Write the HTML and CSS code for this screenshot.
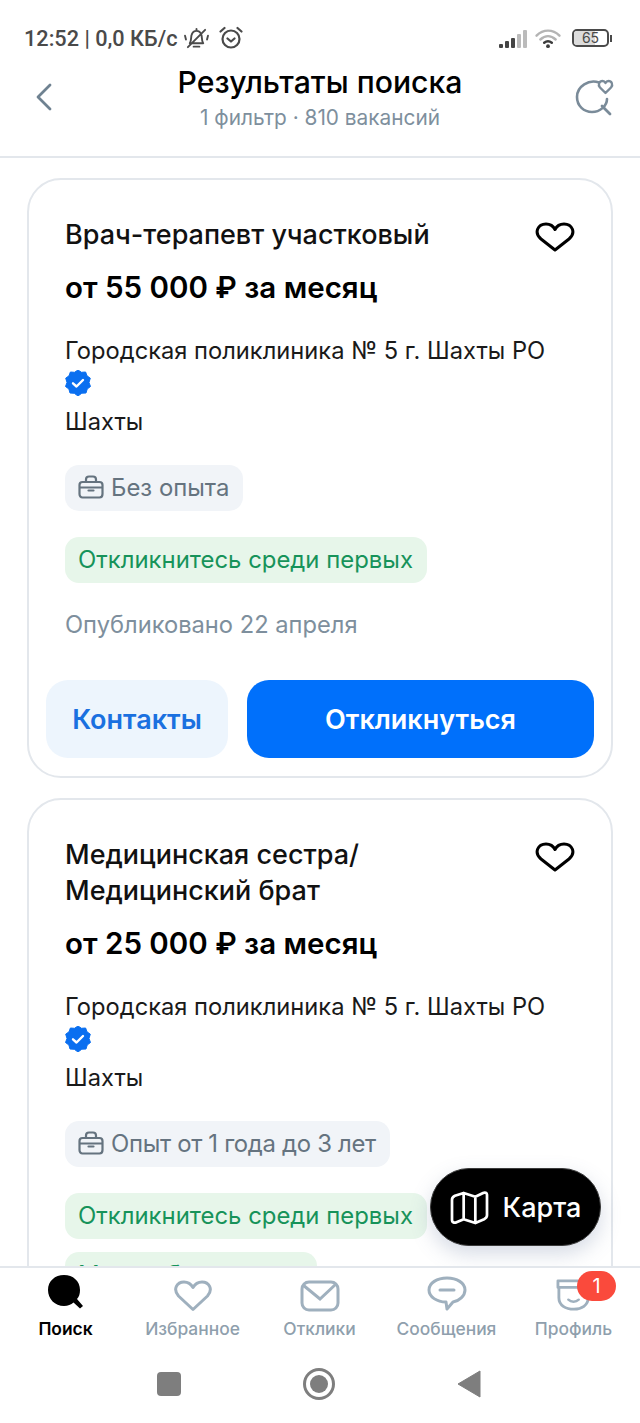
FILE: index.html
```html
<!DOCTYPE html>
<html lang="ru">
<head>
  <meta charset="UTF-8">
  <title>Результаты поиска</title>
  <link rel="stylesheet" href="styles.css">
</head>
<body>
  <svg class="defs" width="0" height="0">
    <symbol id="heart" viewBox="0 0 40 30">
      <path d="M20 28 L6 17 C-1.500 10.500 3 2 11 2 C15 2 18 3.500 20 7.500 C22 3.500 25 2 29 2 C37 2 41.500 10.500 34 17 Z" fill="none" stroke="currentColor" stroke-width="3" stroke-linejoin="round"/>
    </symbol>
    <symbol id="verified" viewBox="0 0 26 26">
      <path d="M13 0 L16.500 2.300 L20.600 2 L22 5.800 L25.300 8.200 L24 12.500 L25.500 16.500 L22.200 19 L21 23 L16.800 23.200 L13 26 L9.300 23.300 L5 23 L3.900 19 L0.500 16.500 L2 12.500 L0.700 8.200 L4 5.800 L5.400 2 L9.500 2.300 Z" fill="#0a6ff0" stroke="#0a6ff0" stroke-linejoin="round"/>
      <path d="M8 13.300 L11.500 16.500 L18 10" fill="none" stroke="#fff" stroke-width="2.400" stroke-linecap="round" stroke-linejoin="round"/>
    </symbol>
    <symbol id="case" viewBox="0 0 26 24">
      <path d="M8 7 V4.500 C8 2.500 9.500 1.500 11 1.500 H15 C16.500 1.500 18 2.500 18 4.500 V7 M4.500 7 H21.500 C23.300 7 24.500 8.200 24.500 10 V19 C24.500 21 23.300 22.500 21.500 22.500 H4.500 C2.700 22.500 1.500 21 1.500 19 V10 C1.500 8.200 2.700 7 4.500 7 Z M1.500 12.500 H24.500 M10.500 15.500 H15.500" fill="none" stroke="currentColor" stroke-width="2.200" stroke-linecap="round"/>
    </symbol>
  </svg>

  <div class="phone">
    <header class="top">
      <div class="statusbar">
        <div class="status-left">
          <span>12:52 | 0,0 КБ/с</span>
          <svg class="ic-bell" viewBox="0 0 28 24" width="27" height="23">
            <path d="M7 17 C9 14 8 10 9 8 C10 5 12 4 14 4 C16 4 18 5 19 8 C20 10 19 14 21 17 Z M11 20.500 H17 M14 2 V4 M5 21 L23 3 M2 9 L3 13 M26 9 L25 13" fill="none" stroke="#4a4a4a" stroke-width="2" stroke-linecap="round" stroke-linejoin="round"/>
          </svg>
          <svg class="ic-alarm" viewBox="0 0 24 24" width="24" height="24">
            <circle cx="12" cy="13" r="8.500" fill="none" stroke="#4a4a4a" stroke-width="2.200"/>
            <path d="M8.500 12.500 L12 15.500 L15.500 12.500 M1.500 5.500 L5.500 2 M22.500 5.500 L18.500 2" fill="none" stroke="#4a4a4a" stroke-width="2.200" stroke-linecap="round" stroke-linejoin="round"/>
          </svg>
        </div>
        <div class="status-right">
          <div class="signal">
            <i class="bar b1"></i><i class="bar b2"></i><i class="bar b3"></i><i class="bar b4 dim"></i><i class="bar b5 dim"></i>
          </div>
          <svg class="wifi" viewBox="0 0 28 22" width="28" height="21">
            <path d="M2 8 C9 1 19 1 26 8" fill="none" stroke="#b4b4b4" stroke-width="2.600" stroke-linecap="round"/>
            <path d="M6 12 C11 7.500 17 7.500 22 12" fill="none" stroke="#b4b4b4" stroke-width="2.600" stroke-linecap="round"/>
            <path d="M10 15.500 C12.500 13.500 15.500 13.500 18 15.500" fill="none" stroke="#3c3c3c" stroke-width="2.600" stroke-linecap="round"/>
            <circle cx="14" cy="19" r="2" fill="#3c3c3c"/>
          </svg>
          <div class="battery"><span class="fill"></span><span class="level">65</span></div>
          <i class="battery-tip"></i>
        </div>
      </div>
      <div class="titlebar">
        <svg class="back" viewBox="0 0 18 28" width="18" height="28">
          <path d="M15 2 L3 14 L15 26" fill="none" stroke="#6f8291" stroke-width="2.800" stroke-linecap="round" stroke-linejoin="round"/>
        </svg>
        <div class="title-text">
          <h1>Результаты поиска</h1>
          <p>1 фильтр · 810 вакансий</p>
        </div>
        <svg class="saved" viewBox="0 0 40 38" width="40" height="38">
          <path d="M24 3.500 C14 0 2 7 2 18 C2 27 9 33 17 33 C25 33 32 27 32 20" fill="none" stroke="#7a8b99" stroke-width="2.600" stroke-linecap="round"/>
          <path d="M27 27 L35 35" fill="none" stroke="#7a8b99" stroke-width="2.800" stroke-linecap="round"/>
          <path d="M30.500 14 L25 8.500 C22.500 5.500 24.500 2 27.500 2 C29 2 30 3 30.500 4 C31 3 32 2 33.500 2 C36.500 2 38.500 5.500 36 8.500 Z" fill="none" stroke="#7a8b99" stroke-width="2.400" stroke-linejoin="round"/>
        </svg>
      </div>
    </header>

    <main class="list">
      <article class="card">
        <div class="card-head">
          <h2>Врач-терапевт участковый</h2>
          <svg class="fav"><use href="#heart"/></svg>
        </div>
        <div class="salary">от 55 000 ₽ за месяц</div>
        <div class="company">Городская поликлиника № 5 г. Шахты РО</div>
        <svg class="verified"><use href="#verified"/></svg>
        <div class="city">Шахты</div>
        <div class="tags">
          <span class="tag tag-gray"><svg class="case"><use href="#case"/></svg>Без опыта</span>
          <span class="tag tag-green">Откликнитесь среди первых</span>
        </div>
        <div class="published">Опубликовано 22 апреля</div>
        <div class="actions">
          <button class="btn btn-light">Контакты</button>
          <button class="btn btn-primary">Откликнуться</button>
        </div>
      </article>

      <article class="card">
        <div class="card-head">
          <h2>Медицинская сестра/<br>Медицинский брат</h2>
          <svg class="fav"><use href="#heart"/></svg>
        </div>
        <div class="salary">от 25 000 ₽ за месяц</div>
        <div class="company">Городская поликлиника № 5 г. Шахты РО</div>
        <svg class="verified"><use href="#verified"/></svg>
        <div class="city">Шахты</div>
        <div class="tags">
          <span class="tag tag-gray tag-narrow"><svg class="case"><use href="#case"/></svg>Опыт от 1 года до 3 лет</span>
          <span class="tag tag-green">Откликнитесь среди первых</span>
          <span class="tag tag-green tag-tight">Можно без резюме</span>
        </div>
      </article>
    </main>

    <button class="map-btn">
      <svg viewBox="0 0 40 36" width="39" height="35">
        <path d="M14 3 L26 7 L34 3 C36 2 38 3 38 5 V26 C38 28 37 29 35 30 L26 34 L14 30 L6 33.500 C4 34 2 33 2 31 V10 C2 8 3 7 5 6 Z M14 3 V30 M26 7 V34" fill="none" stroke="#fff" stroke-width="2.800" stroke-linejoin="round"/>
      </svg>
      Карта
    </button>

    <nav class="tabbar">
      <a class="tab active">
        <svg viewBox="0 0 38 38" width="38" height="38">
          <path d="M17 1 C26 1 33 7 33 16 C33 20 32 23 30 25 L36 32 L33 34.500 L26.500 28.500 C24 30.500 21 32 17 32 C8 32 1 25 1 16 C1 7 8 1 17 1 Z" fill="#000"/>
        </svg>
        <span>Поиск</span>
      </a>
      <a class="tab">
        <svg viewBox="0 0 40 32" width="40" height="32">
          <path d="M20 29.500 L5.500 16 C-0.500 9 4 2 11 2 C15 2 18 4 20 7.500 C22 4 25 2 29 2 C36 2 40.500 9 34.500 16 Z" fill="none" stroke="#9fb0be" stroke-width="3" stroke-linejoin="round"/>
        </svg>
        <span>Избранное</span>
      </a>
      <a class="tab">
        <svg viewBox="0 0 40 32" width="40" height="32">
          <rect x="2" y="2" width="36" height="28" rx="7" fill="none" stroke="#9fb0be" stroke-width="3"/>
          <path d="M3 5 L20 19 L36 4" fill="none" stroke="#9fb0be" stroke-width="3"/>
        </svg>
        <span>Отклики</span>
      </a>
      <a class="tab">
        <svg viewBox="0 0 40 36" width="40" height="36">
          <path d="M20 2 C30 2 38 7 38 14 C38 20 32 25 26 26 L20 33 L19 26 C10 26 2 21 2 14 C2 7 10 2 20 2 Z M13 14 H27" fill="none" stroke="#9fb0be" stroke-width="3" stroke-linejoin="round" stroke-linecap="round"/>
        </svg>
        <span>Сообщения</span>
      </a>
      <a class="tab tab-profile">
        <svg viewBox="0 0 40 36" width="38" height="34">
          <path d="M3 3 L24 3 M3 3 V10 L30 10 M4 10 V21 C4 29 11 33 20 33 C28 33 35 29 35 21 V14" fill="none" stroke="#9fb0be" stroke-width="3" stroke-linecap="round" stroke-linejoin="round"/>
          <path d="M14 23 C17 26 22 26 25 23" fill="none" stroke="#9fb0be" stroke-width="2.600" stroke-linecap="round"/>
        </svg>
        <span>Профиль</span>
        <b class="badge">1</b>
      </a>
    </nav>

    <div class="navbar">
      <i class="nav-square"></i>
      <i class="nav-circle"><i class="nav-dot"></i></i>
      <svg class="nav-back" viewBox="0 0 24 28" width="24" height="28"><path d="M23 1 V27 L1 14 Z" fill="#7e7e7e" stroke="#7e7e7e" stroke-linejoin="round"/></svg>
    </div>
  </div>
</body>
</html>
```

FILE: styles.css
```css
* {
  box-sizing: border-box;
}

body {
  margin: 0;
  font-family: "Inter", "Noto Sans", sans-serif;
  background: #fff;
}

.defs {
  display: none;
}

.phone {
  width: 640px;
  height: 1423px;
  display: flex;
  flex-direction: column;
  position: relative;
  overflow: hidden;
  background: #fff;
}

/* top */
.top {
  height: 158px;
  flex: none;
  border-bottom: 2px solid #e3e7ec;
  padding-top: 24px;
}

.statusbar {
  height: 28px;
  display: flex;
  justify-content: space-between;
  align-items: center;
  padding: 0 28px 0 24px;
  color: #4a4a4a;
}

.status-left {
  display: flex;
  align-items: center;
  gap: 6px;
  font-size: 21.7px;
  font-family: "Roboto", sans-serif;
  font-weight: 500;
}

.ic-alarm {
  margin-left: 3px;
}

.status-right {
  display: flex;
  align-items: center;
  gap: 7px;
}

.signal {
  display: flex;
  align-items: flex-end;
  gap: 2px;
  height: 19px;
}

.wifi {
  margin-right: 3px;
}

.bar {
  width: 4px;
  background: #444;
  border-radius: 1px;
}
.bar.dim { background: #bbb; }
.b1 { height: 4px; }
.b2 { height: 7px; }
.b3 { height: 10px; }
.b4 { height: 14px; }
.b5 { height: 18px; }

.battery {
  width: 37px;
  height: 18px;
  border: 2px solid #4a4a4a;
  border-radius: 5px;
  position: relative;
  font-size: 14px;
  line-height: 14px;
  text-align: center;
  overflow: hidden;
}

.fill {
  position: absolute;
  left: 0;
  top: 0;
  bottom: 0;
  width: 64%;
  background: #dcdcdc;
}

.level {
  position: relative;
}

.battery-tip {
  width: 2px;
  height: 7px;
  margin-left: -6px;
  background: #4a4a4a;
}

.titlebar {
  display: flex;
  align-items: flex-start;
  justify-content: space-between;
  padding: 0 25px 0 35px;
  position: relative;
  height: 80px;
}

.back {
  margin-top: 31px;
}

.saved {
  margin-top: 27px;
}

.title-text {
  position: absolute;
  left: 0;
  right: 0;
  top: 10px;
  text-align: center;
}

h1 {
  margin: 0;
  font-size: 30.2px;
  line-height: 40px;
  font-weight: 500;
  color: #000;
}

.title-text p {
  margin: 2px 0 0;
  font-size: 20.8px;
  line-height: 28px;
  color: #7e8f9d;
}

/* list */
.list {
  flex: 1;
  min-height: 0;
  overflow: hidden;
  padding: 20px 27px 0;
  display: flex;
  flex-direction: column;
  gap: 20px;
}

.card {
  flex: none;
  border: 2px solid #e3e7ec;
  border-radius: 34px;
  padding: 37px 17px 18px 36px;
  background: #fff;
}

.card-head {
  display: flex;
  justify-content: space-between;
  align-items: flex-start;
  padding-right: 19px;
}

h2 {
  margin: 0;
  font-size: 27px;
  line-height: 36px;
  font-weight: 500;
  color: #111;
}

.fav {
  width: 40px;
  height: 30px;
  margin-top: 5px;
  flex: none;
  color: #000;
}

.salary {
  margin-top: 16px;
  font-size: 29.5px;
  line-height: 36px;
  font-weight: 600;
  color: #000;
}

.company {
  margin-top: 28px;
  font-size: 23.7px;
  line-height: 36px;
  color: #1a1a1a;
}

.verified {
  display: block;
  width: 26px;
  height: 26px;
  margin: 1px 0 0;
}

.city {
  margin-top: 8px;
  font-size: 23.7px;
  line-height: 36px;
  color: #1a1a1a;
}

.tags {
  margin-top: 25px;
  display: flex;
  flex-direction: column;
  align-items: flex-start;
  gap: 26px;
}

.tag {
  display: inline-flex;
  align-items: center;
  height: 46px;
  padding: 0 14px 2px 13px;
  border-radius: 14px;
  font-size: 23.9px;
}

.tag-narrow {
  letter-spacing: -0.32px;
}

.tag-tight {
  margin-top: -13px;
  letter-spacing: -0.25px;
}

.tag-gray {
  background: #f1f4f8;
  color: #65737f;
}

.tag-green {
  background: #e7f6ea;
  color: #17935a;
}

.case {
  width: 26px;
  height: 24px;
  margin-right: 7px;
  color: #65737f;
}

.published {
  margin-top: 24px;
  font-size: 23.7px;
  line-height: 36px;
  color: #7e8f9d;
}

.actions {
  margin-top: 37px;
  margin-left: -19px;
  display: flex;
  gap: 19px;
}

.btn {
  height: 78px;
  border: none;
  border-radius: 22px;
  font-family: inherit;
  font-size: 27px;
  font-weight: 600;
}

.btn-light {
  width: 182px;
  background: #edf5fd;
  color: #1a70e0;
}

.btn-primary {
  flex: 1;
  background: #0070fb;
  color: #fff;
}

/* floating map */
.map-btn {
  position: absolute;
  left: 430px;
  top: 1168px;
  width: 171px;
  height: 78px;
  border: 1px solid #3a3a3a;
  border-radius: 39px;
  background: #000;
  color: #fff;
  font-family: inherit;
  font-size: 27px;
  font-weight: 500;
  display: flex;
  align-items: center;
  justify-content: center;
  gap: 14px;
  box-shadow: 0 8px 20px rgba(90, 110, 150, 0.25);
}

/* tabs */
.tabbar {
  flex: none;
  height: 84px;
  border-top: 2px solid #e3e7ec;
  background: #fff;
  display: grid;
  grid-template-columns: repeat(5, 127px);
  padding-left: 2px;
  position: relative;
  z-index: 1;
}

.tab {
  display: flex;
  flex-direction: column;
  align-items: center;
  justify-content: flex-end;
  gap: 6px;
  position: relative;
  font-size: 17.4px;
  font-weight: 500;
  color: #8f9fad;
  height: 72px;
  white-space: nowrap;
}

.tab span {
  line-height: 22px;
}

.tab.active {
  color: #000;
  font-weight: 600;
}

.badge {
  position: absolute;
  top: 3px;
  left: 67px;
  width: 39px;
  height: 30px;
  border-radius: 15px;
  background: #fa4a3c;
  color: #fff;
  font-size: 20px;
  font-weight: 400;
  line-height: 30px;
  text-align: center;
}

/* android nav */
.navbar {
  flex: none;
  height: 73px;
  display: flex;
  align-items: flex-start;
  justify-content: center;
  gap: 122px;
  padding: 18px 3px 0 0;
  background: #fff;
}

.nav-square {
  width: 24px;
  height: 24px;
  margin-top: 4px;
  background: #7e7e7e;
  border-radius: 4px;
}

.nav-circle {
  width: 32px;
  height: 32px;
  border: 3px solid #7e7e7e;
  border-radius: 50%;
  display: flex;
  align-items: center;
  justify-content: center;
}

.nav-dot {
  width: 18px;
  height: 18px;
  border-radius: 50%;
  background: #7e7e7e;
}

.nav-back {
  margin-top: 2px;
}
```
